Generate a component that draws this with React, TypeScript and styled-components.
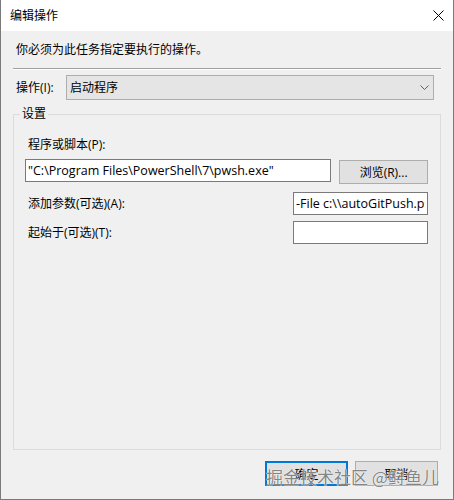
import React from "react";
import styled, { createGlobalStyle } from "styled-components";

const GlobalStyle = createGlobalStyle`
  html, body { margin: 0; padding: 0; background: #ffffff; }
  body {
    font-family: "Open Sans", "Noto Sans CJK SC", sans-serif;
    font-size: 12px;
    color: #000000;
  }
  * { box-sizing: border-box; }
`;

const Window = styled.div`
  position: relative;
  width: 454px;
  height: 500px;
  display: flex;
  flex-direction: column;
  background: #f0f0f0;
  border-left: 1px solid #7a7a7a;
  border-right: 1px solid #7a7a7a;
  border-bottom: 1px solid #7a7a7a;
  overflow: hidden;
`;

const TitleBar = styled.div`
  height: 31px;
  flex: 0 0 31px;
  background: #ffffff;
  display: flex;
  align-items: center;
  justify-content: space-between;
  padding: 0 9px 0 9px;
`;

const TitleText = styled.span`
  line-height: 16px;
  font-size: 12px;
`;

const Body = styled.div`
  flex: 1;
  display: flex;
  flex-direction: column;
  padding: 11px 12px 13px 12px;
`;

const Intro = styled.div`
  margin-left: 3px;
  line-height: 16px;
`;

const Separator = styled.div`
  margin-top: 10px;
  height: 2px;
  border-top: 1px solid #a0a0a0;
  border-bottom: 1px solid #ffffff;
`;

const ActionRow = styled.div`
  margin-top: 5px;
  display: flex;
  align-items: center;
`;

const ActionLabel = styled.span`
  margin-left: 3px;
  width: 50px;
  line-height: 16px;
`;

const Select = styled.div`
  flex: 1;
  margin-right: 7px;
  height: 25px;
  display: flex;
  align-items: center;
  justify-content: space-between;
  padding: 0 4px 0 3px;
  background: #e5e5e5;
  border: 1px solid #adadad;
  line-height: 16px;
`;

const Group = styled.div`
  position: relative;
  flex: 1;
  margin-top: 14px;
  border: 1px solid #dcdcdc;
  padding: 22px 12px 0 11px;
`;

const Legend = styled.span`
  position: absolute;
  top: -9px;
  left: 6px;
  padding: 0 2px;
  background: #f0f0f0;
  line-height: 16px;
`;

const FieldLabel = styled.span`
  display: block;
  margin-left: 3px;
  line-height: 16px;
`;

const Row = styled.div<{ $gap: number; $split?: boolean }>`
  margin-top: ${(p) => p.$gap}px;
  display: flex;
  align-items: ${(p) => (p.$split ? "center" : "flex-start")};
  justify-content: ${(p) => (p.$split ? "space-between" : "flex-start")};
  gap: 8px;
`;

const TextBox = styled.input<{ $w: number }>`
  width: ${(p) => p.$w}px;
  height: 23px;
  margin: 0;
  padding: 0 2px;
  border: 1px solid #7a7a7a;
  background: #ffffff;
  font: inherit;
  font-size: 12.5px;
  color: #000000;
  outline: none;
`;

const Button = styled.button<{ $primary?: boolean }>`
  width: 83px;
  height: 25px;
  margin: 0;
  padding: 0;
  background: #e1e1e1;
  border: ${(p) => (p.$primary ? "2px solid #0078d7" : "1px solid #adadad")};
  font: inherit;
  font-size: 12px;
  color: #000000;
`;

const BrowseButton = styled(Button)`
  width: 89px;
  height: 24px;
  margin-top: 1px;
`;

const Footer = styled.div`
  margin-top: 11px;
  margin-right: 3px;
  display: flex;
  justify-content: flex-end;
  gap: 7px;
`;

const Watermark = styled.div`
  position: absolute;
  left: 265px;
  top: 465px;
  font-family: "Noto Sans CJK SC", sans-serif;
  font-size: 17px;
  line-height: 24px;
  color: rgba(100, 100, 100, 0.8);
  text-shadow: 0 0 1px #ffffff, 0 0 1px #ffffff;
  white-space: nowrap;
  pointer-events: none;
`;

const CloseIcon = () => (
  <svg width="11" height="11" viewBox="0 0 11 11">
    <path d="M0.5 0.5 L10.5 10.5 M10.5 0.5 L0.5 10.5" stroke="#000" strokeWidth="1" fill="none" />
  </svg>
);

const Chevron = () => (
  <svg width="9" height="5" viewBox="0 0 9 5">
    <polyline points="0.5,0.5 4.5,4.5 8.5,0.5" stroke="#606060" strokeWidth="1" fill="none" />
  </svg>
);

export default function App() {
  return (
    <>
      <GlobalStyle />
      <Window>
        <TitleBar>
          <TitleText>编辑操作</TitleText>
          <CloseIcon />
        </TitleBar>
        <Body>
          <Intro>你必须为此任务指定要执行的操作。</Intro>
          <Separator />
          <ActionRow>
            <ActionLabel>操作(I):</ActionLabel>
            <Select>
              <span>启动程序</span>
              <Chevron />
            </Select>
          </ActionRow>
          <Group>
            <Legend>设置</Legend>
            <FieldLabel>程序或脚本(P):</FieldLabel>
            <Row $gap={6}>
              <TextBox $w={307} readOnly value={'"C:\\Program Files\\PowerShell\\7\\pwsh.exe"'} />
              <BrowseButton>浏览(R)...</BrowseButton>
            </Row>
            <Row $gap={8} $split>
              <FieldLabel>添加参数(可选)(A):</FieldLabel>
              <TextBox $w={135} readOnly value={"-File c:\\\\autoGitPush.ps1"} />
            </Row>
            <Row $gap={6} $split>
              <FieldLabel>起始于(可选)(T):</FieldLabel>
              <TextBox $w={135} readOnly value="" />
            </Row>
          </Group>
          <Footer>
            <Button $primary>确定</Button>
            <Button>取消</Button>
          </Footer>
        </Body>
        <Watermark>掘金技术社区 @鲟鱼儿</Watermark>
      </Window>
    </>
  );
}
